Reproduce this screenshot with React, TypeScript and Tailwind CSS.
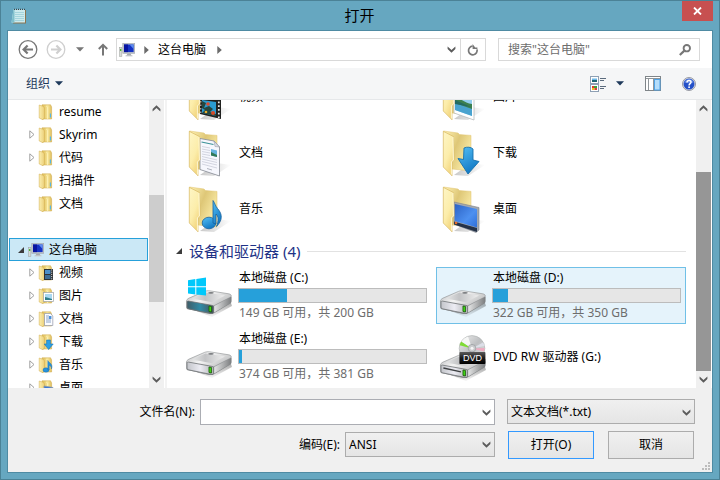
import type { ReactNode } from "react";

type Kind = "plain" | "video" | "picture" | "document" | "download" | "music" | "desktop";

/* ---------- small glyphs ---------- */

function Chevron({ up = false }: { up?: boolean }) {
  return (
    <svg width="9" height="7" viewBox="0 0 9 7" className={up ? "rotate-180" : ""} aria-hidden="true">
      <path d="M0.6 0.4L4.5 4L8.4 0.4V3L4.5 6.8L0.6 3Z" fill="#5c5c5c" />
    </svg>
  );
}

function Caret({ color }: { color: string }) {
  return (
    <svg width="8" height="5" viewBox="0 0 8 5" aria-hidden="true">
      <path d="M0 0.3H8L4 4.6Z" fill={color} />
    </svg>
  );
}

function Crumb() {
  return (
    <svg width="5" height="8" viewBox="0 0 5 8" aria-hidden="true">
      <path d="M0.3 0L4.8 4L0.3 8Z" fill="#6b6b6b" />
    </svg>
  );
}

function Computer() {
  return (
    <svg width="16" height="16" viewBox="0 0 16 16" aria-hidden="true">
      <rect x="0.5" y="5.5" width="2.4" height="9" fill="#d8dad8" stroke="#9a9e9a" strokeWidth="0.5" />
      <rect x="1.1" y="7" width="1.2" height="2" fill="#3cb521" />
      <rect x="3.8" y="1.4" width="12" height="10" fill="#bfc3c8" stroke="#9aa0a6" strokeWidth="0.5" />
      <rect x="5" y="2.5" width="9.6" height="7.6" fill="#1533c4" />
      <path d="M5 2.5H9V10.1H5Z" fill="#0714a0" />
      <path d="M10.5 2.5H14.6V7Z" fill="#5d8cf0" />
      <path d="M8.5 11.5H11.5L12.8 14H7.2Z" fill="#a5a9ad" />
      <rect x="6.5" y="13.3" width="7" height="1.1" fill="#c9cccf" />
    </svg>
  );
}

/* ---------- 16px folders ---------- */

function smallOverlay(kind: Kind): ReactNode {
  switch (kind) {
    case "video":
      return (
        <g>
          <rect x="6" y="4" width="9" height="11" fill="#2e3134" />
          <rect x="7" y="5" width="5.5" height="4" fill="#4b8fc9" />
          <rect x="7" y="10" width="5.5" height="4" fill="#3d6d96" />
          <path d="M13.7 4.5V15" stroke="#e8e8e8" strokeWidth="1" strokeDasharray="1 1.2" />
        </g>
      );
    case "picture":
      return (
        <g>
          <rect x="5.5" y="4.5" width="10" height="9" fill="#fff" stroke="#9aa0a4" strokeWidth="0.7" />
          <rect x="7" y="6" width="7" height="6" fill="#a9d8f2" />
          <path d="M7 9L10 9.8L14 11V12H7Z" fill="#2f7f8c" />
        </g>
      );
    case "document":
      return (
        <g>
          <path d="M6.5 2.5H12.5L14.8 5V14.5H6.5Z" fill="#fbfcff" stroke="#9096a8" strokeWidth="0.7" />
          <path d="M8 5H11M8 7H13M8 9H13M8 11H13" stroke="#7f9cc4" strokeWidth="0.9" />
          <rect x="11" y="5" width="2.4" height="3" fill="#4a90d9" />
        </g>
      );
    case "download":
      return <path d="M8.6 6H12.4V10H15.2L10.6 15.5L6.2 10H8.6Z" fill="#2ba0e6" stroke="#1873b4" strokeWidth="0.6" />;
    case "music":
      return (
        <g fill="#2593de" stroke="#1565a8" strokeWidth="0.4">
          <ellipse cx="8" cy="13" rx="3" ry="2.2" />
          <path d="M9.8 13V3.5C11 6 15.5 7 13.4 12C13.6 9.6 12.4 8.6 11.2 8.2V13Z" />
        </g>
      );
    case "desktop":
      return <path d="M6 6L15 7.5V14L6 12.5Z" fill="#3978d8" stroke="#8a98a8" strokeWidth="0.8" />;
    default:
      return <path d="M12.4 9.5V13.5" stroke="#4db7e8" strokeWidth="1.1" />;
  }
}

function SmallFolder({ kind }: { kind: Kind }) {
  return (
    <svg width="16" height="16" viewBox="0 0 16 16" className="shrink-0" aria-hidden="true">
      <path d="M4 0.8H12.6L13.6 3V15H4Z" fill="url(#smallBack)" stroke="#cfa84a" strokeWidth="0.5" />
      <path d="M8.2 2L9.6 3.4V15" stroke="#fff4bd" strokeWidth="0.8" fill="none" />
      <path d="M1.2 1L4.8 2.2L6.4 3.6V13.8L5 15.8L1.2 14Z" fill="url(#smallLeaf)" stroke="#cfa84a" strokeWidth="0.5" />
      {smallOverlay(kind)}
    </svg>
  );
}

/* ---------- 48px folders ---------- */

function largeOverlay(kind: Kind): ReactNode {
  switch (kind) {
    case "video":
      return (
        <g>
          <path d="M16 12L37 16V46L16 41Z" fill="#20211f" />
          <path d="M18 27L32 29V43L18 40Z" fill="#2b9bd0" />
          <path d="M18 28L22 30L20 35L25 33L29 36L26 39L32 41V43L18 40L21 37L18 35Z" fill="#24463f" />
          <circle cx="24" cy="31" r="1.8" fill="#df4b2d" />
          <circle cx="29" cy="40" r="2" fill="#d74b28" />
          <circle cx="22" cy="39" r="1.3" fill="#e8ae30" />
          <path d="M34.8 17V45" stroke="#eee" strokeWidth="1.7" strokeDasharray="1.8 2" />
          <path d="M16.8 14V41" stroke="#ddd" strokeWidth="1" strokeDasharray="1.5 2" />
        </g>
      );
    case "picture":
      return (
        <g>
          <path d="M16 10L36 14V47L16 40Z" fill="#fff" stroke="#b7bbbd" strokeWidth="0.8" />
          <path d="M17 13L34 17V43L17 37Z" fill="#94ceef" />
          <path d="M17 26C23 24 27 31 34 31V37L17 33Z" fill="#3c8050" />
          <path d="M17 30L34 36V43L17 37Z" fill="#4aa3cf" />
          <path d="M17 27L26 31L33 34L17 31Z" fill="#246a60" />
        </g>
      );
    case "document":
      return (
        <g>
          <path d="M16 9.5L30 12L35.5 18V47L16 40.5Z" fill="#f6f7fd" stroke="#8f939c" strokeWidth="0.9" />
          <path d="M30 12L31 17.5L35.5 18Z" fill="#d8dbe5" stroke="#8f939c" strokeWidth="0.5" />
          <path d="M17.5 13L29.5 15.5" stroke="#3c9298" strokeWidth="1.2" />
          <path
            d="M18 17.5L26 19M18 20L26 21.5M18 22.5L26 24M18 25L26 26.5M18 27.5L33 31M18 30L33 33.5M18 32.5L33 36M18 35L33 39"
            stroke="#c9ccd8"
            strokeWidth="0.8"
          />
          <path d="M27 20L33 21.5V28L27 26.5Z" fill="#67b3df" />
          <path d="M27 23L33 26V28L27 26.5Z" fill="#317a58" />
          <path d="M23 39.5L28 41" stroke="#9a9fac" strokeWidth="0.8" />
        </g>
      );
    case "download":
      return (
        <path
          d="M26 19C29 17.6 33 18 35 20V31L41 32.5L30 45L20 29.5L25.5 30.5Z"
          fill="url(#blueGlow)"
          stroke="#1671ad"
          strokeWidth="0.9"
        />
      );
    case "music":
      return (
        <g>
          <ellipse cx="25" cy="38" rx="6.8" ry="5.8" fill="url(#blueGlow)" stroke="#17619d" strokeWidth="0.8" />
          <path
            d="M29 38V15.5C31 18 31 20.5 33.5 23.5C37.5 28 38.8 33 35 38.5L32.5 41.5C34.8 36 34.5 31 32 29V39Z"
            fill="url(#blueGlow)"
            stroke="#17619d"
            strokeWidth="0.8"
          />
        </g>
      );
    case "desktop":
      return (
        <g>
          <path d="M16 17L41 22.5V45L38 47.5L16 39Z" fill="#a2a8b0" stroke="#7d8288" strokeWidth="0.6" />
          <path d="M16.8 19L39 24V42.5L16.8 36Z" fill="url(#screen)" />
          <path d="M16 36.5L39 43V47L16 39.5Z" fill="#243248" />
          <circle cx="18" cy="38" r="1.3" fill="#e36a2c" />
        </g>
      );
    default:
      return null;
  }
}

function LargeFolder({ kind }: { kind: Kind }) {
  return (
    <svg width="48" height="48" viewBox="0 0 48 48" className="shrink-0" aria-hidden="true">
      <path d="M16 46L33 34L47 36L30 47Z" fill="url(#shade)" />
      <path d="M5.5 2L20 4L21.5 5.6L33 6.4V42L14 40Z" fill="url(#backFill)" stroke="#e0c26c" strokeWidth="0.5" />
      {largeOverlay(kind)}
      <path d="M5.3 2.3L15.4 7.5L16 31L14 33V46.8L5.3 38Z" fill="url(#leafFill)" stroke="#d9b862" strokeWidth="0.7" />
      <path d="M15 8L15.4 31L13.4 33V45.6" stroke="#fffadd" strokeWidth="0.9" fill="none" />
    </svg>
  );
}

/* ---------- 48px drives ---------- */

function DriveIcon({ kind }: { kind: "system" | "disk" | "dvd" }) {
  return (
    <svg width="48" height="48" viewBox="0 0 48 48" className="shrink-0" aria-hidden="true">
      <g transform={kind === "dvd" ? "translate(0 3)" : undefined}>
        <path d="M10 38L28 45L48 34L46 28Z" fill="url(#driveShadow)" />
        <path
          d="M2.4 29.5V35.4C2.4 36.6 3 37 4.2 37.3L25.6 41.9C27.4 42.2 28.6 42 30 41.2L46 31.8C47.2 31 47.6 30.2 47.6 29V24.6L28 32Z"
          fill="#86898b"
        />
        <path
          d="M2.4 29.6C2.4 27.8 3.4 27 5 26.1L20.5 19.4C22.4 18.7 23.8 18.6 25.6 18.8L44.8 21.8C47.6 22.4 48 24.2 46 25.4L31 33.2C29.4 34 28.2 34 26.6 33.7L4.4 30Z"
          fill="url(#driveTop)"
          stroke="#8b8e91"
          strokeWidth="0.6"
        />
        <path d="M8 26.6L21.5 20.6L41 23.4L28 30.2Z" fill="url(#drivePlate)" />
        <path
          d="M3 30.2C3 29.2 3.6 28.9 4.6 29.1L27 33.2C29 33.5 29.6 34 29.6 35.4V39.8C29.6 41.2 28.8 41.7 27 41.4L4.8 36.9C3.6 36.6 3 36 3 35Z"
          fill={kind === "system" ? "url(#driveTeal)" : "url(#driveFront)"}
          stroke="#707376"
          strokeWidth="0.8"
        />
        <path d="M30.2 34L47 25V30.4L30.2 40.6Z" fill="url(#driveSide)" />
        <path d="M25 34L27.4 34.4V40L25 39.5Z" fill="#43e016" stroke="#1d5c0d" strokeWidth="0.9" />
        <ellipse cx="27" cy="20.8" rx="2.8" ry="0.9" fill="#77797c" />
        {kind === "dvd" && <path d="M5.4 32L23 35.8" stroke="#3e4143" strokeWidth="1.3" />}
      </g>
      {kind === "system" && (
        <path d="M4 8.2L11.3 7.1V14.3H4ZM12.3 7L22 5.6V14.3H12.3ZM4 15.3H11.3V22.4L4 21.4ZM12.3 15.3H22V23.6L12.3 22.4Z" fill="#00c8fb" />
      )}
      {kind === "dvd" && (
        <g>
          <circle cx="34" cy="15.4" r="12.8" fill="url(#disc)" stroke="#b2b4b5" strokeWidth="0.7" />
          <path d="M34 15.4L21.6 12.2A12.8 12.8 0 0 1 23.4 8.4Z" fill="#7fdc35" />
          <path d="M34 15.4L23.4 8.4A12.8 12.8 0 0 1 30 3.4Z" fill="#f6f7f6" />
          <path d="M34 15.4L45 9.4A12.8 12.8 0 0 1 46.6 13Z" fill="#dcdfe8" />
          <path d="M34 15.4L46.6 15A12.8 12.8 0 0 1 46 18.6Z" fill="#f0aac0" />
          <circle cx="34" cy="15.2" r="3.8" fill="#c9cbcd" stroke="#8f9295" strokeWidth="0.6" />
          <circle cx="34" cy="15.2" r="1.5" fill="#f6f6f6" />
          <rect x="21.4" y="19" width="26" height="12" rx="0.8" fill="url(#dvdBand)" />
          <text x="34.4" y="28.2" textAnchor="middle" fontSize="9" fontWeight="500" fill="#fff" fontFamily="'Liberation Sans', sans-serif">
            DVD
          </text>
        </g>
      )}
    </svg>
  );
}

function Gradients() {
  return (
    <svg width="0" height="0" className="absolute" aria-hidden="true">
      <defs>
        <linearGradient id="smallBack">
          <stop offset="0.2" stopColor="#e5c766" />
          <stop offset="0.6" stopColor="#f8e79c" />
          <stop offset="1" stopColor="#dfbd5c" />
        </linearGradient>
        <linearGradient id="smallLeaf">
          <stop offset="0" stopColor="#fbeeaf" />
          <stop offset="1" stopColor="#ecd07a" />
        </linearGradient>
        <linearGradient id="backFill" x1="0" y1="0" x2="1" y2="0.6">
          <stop offset="0.1" stopColor="#f9eaa8" />
          <stop offset="0.5" stopColor="#dec777" />
          <stop offset="0.9" stopColor="#f6e6a0" />
        </linearGradient>
        <linearGradient id="leafFill" x1="0" y1="0" x2="0.6" y2="1">
          <stop offset="0" stopColor="#fef6c6" />
          <stop offset="0.6" stopColor="#fcedaa" />
          <stop offset="1" stopColor="#f2d47c" />
        </linearGradient>
        <linearGradient id="shade">
          <stop offset="0" stopColor="#c8c8c8" />
          <stop offset="1" stopColor="#ffffff" />
        </linearGradient>
        <linearGradient id="blueGlow" x1="0" y1="0" x2="0.5" y2="1">
          <stop offset="0" stopColor="#56c0f6" />
          <stop offset="1" stopColor="#1279c4" />
        </linearGradient>
        <linearGradient id="screen" x1="0" y1="0" x2="1" y2="1">
          <stop offset="0" stopColor="#2c62c4" />
          <stop offset="0.6" stopColor="#4d90f0" />
          <stop offset="1" stopColor="#2f6fd8" />
        </linearGradient>
        <linearGradient id="driveShadow" x1="0" y1="0" x2="0.3" y2="1">
          <stop offset="0.3" stopColor="#000" stopOpacity="0.4" />
          <stop offset="1" stopColor="#000" stopOpacity="0.05" />
        </linearGradient>
        <linearGradient id="driveTop" x1="0" y1="0" x2="1" y2="0.5">
          <stop offset="0" stopColor="#b4b6b8" />
          <stop offset="0.5" stopColor="#f4f4f4" />
          <stop offset="1" stopColor="#c2c3c4" />
        </linearGradient>
        <linearGradient id="drivePlate">
          <stop offset="0" stopColor="#e6e7e7" />
          <stop offset="0.4" stopColor="#c2c3c5" />
          <stop offset="1" stopColor="#eeeeee" />
        </linearGradient>
        <linearGradient id="driveFront">
          <stop offset="0" stopColor="#c3c5ca" />
          <stop offset="0.5" stopColor="#ececf3" />
          <stop offset="1" stopColor="#b2b4b6" />
        </linearGradient>
        <linearGradient id="driveTeal">
          <stop offset="0" stopColor="#3f5d68" />
          <stop offset="0.5" stopColor="#2f8ba6" />
          <stop offset="1" stopColor="#48525a" />
        </linearGradient>
        <linearGradient id="driveSide">
          <stop offset="0" stopColor="#e4e5e5" />
          <stop offset="1" stopColor="#7d7f81" />
        </linearGradient>
        <linearGradient id="disc" x1="0" y1="0" x2="1" y2="1">
          <stop offset="0" stopColor="#f2f2f2" />
          <stop offset="0.5" stopColor="#bcbec0" />
          <stop offset="1" stopColor="#e8e8e8" />
        </linearGradient>
        <linearGradient id="dvdBand" x1="0" y1="0" x2="0" y2="1">
          <stop offset="0" stopColor="#5b5b5b" />
          <stop offset="0.5" stopColor="#1b1b1b" />
          <stop offset="1" stopColor="#000000" />
        </linearGradient>
      </defs>
    </svg>
  );
}

/* ---------- building blocks ---------- */

function ScrollBar({ before, thumb, after, dark }: { before: number; thumb: number; after: number; dark?: boolean }) {
  return (
    <div className="flex w-4 shrink-0 flex-col border-r border-white bg-[#f0f0f0]">
      <button type="button" aria-label="向上滚动" className="flex h-[17px] shrink-0 items-center justify-center">
        <Chevron up />
      </button>
      <div style={{ flexGrow: before }} />
      <div className={dark ? "bg-[#969696]" : "bg-[#cdcdcd]"} style={{ flexGrow: thumb }} />
      <div style={{ flexGrow: after }} />
      <button type="button" aria-label="向下滚动" className="flex h-[17px] shrink-0 items-center justify-center">
        <Chevron />
      </button>
    </div>
  );
}

function TreeRow({ label, kind, expandable = true }: { label: string; kind: Kind; expandable?: boolean }) {
  return (
    <li className="flex h-[23px] items-center pl-5">
      <span className="flex w-[9px] shrink-0">
        {expandable && (
          <svg width="6" height="9" viewBox="0 0 6 9" aria-hidden="true">
            <path d="M0.8 0.8L5 4.5L0.8 8.2Z" fill="#fff" stroke="#a0a0a0" strokeWidth="1" />
          </svg>
        )}
      </span>
      <SmallFolder kind={kind} />
      <span className="pl-[5px]">{label}</span>
    </li>
  );
}

function FolderTile({ label, kind }: { label: string; kind: Kind }) {
  return (
    <li className="flex h-[52px] items-center gap-[7px] pl-[2px]">
      <LargeFolder kind={kind} />
      <span>{label}</span>
    </li>
  );
}

type Drive = { name: string; kind: "system" | "disk" | "dvd"; used?: number; note?: string; active?: boolean };

function DriveTile({ name, kind, used, note, active }: Drive) {
  return (
    <li
      className={
        active
          ? "flex h-[57px] items-center gap-[6px] border border-[#70c0e7] bg-[#e5f3fb] pr-1 pl-px"
          : "flex h-[57px] items-center gap-[6px] border border-transparent pr-1 pl-px"
      }
    >
      <DriveIcon kind={kind} />
      {used === undefined ? (
        <span className="pl-px">{name}</span>
      ) : (
        <div className="min-w-0 flex-1">
          <div className="pl-px leading-5">{name}</div>
          <div
            className="h-[15px] border border-[#bcbcbc] bg-[#e6e6e6]"
            role="meter"
            aria-label={name}
            aria-valuenow={used}
            aria-valuemin={0}
            aria-valuemax={100}
          >
            <div className="h-full bg-[#26a0da]" style={{ width: `${used}%` }} />
          </div>
          <div className="pl-px leading-5 text-[#6d6d6d]">{note}</div>
        </div>
      )}
    </li>
  );
}

function Picker({ id, value, className }: { id: string; value: string; className: string }) {
  return (
    <div className={`relative ${className}`}>
      <select
        id={id}
        defaultValue={value}
        aria-label={id === "filetype" ? "文件类型" : undefined}
        className="block h-[25px] w-full appearance-none border border-[#acacac] bg-linear-to-b from-[#f0f0f0] to-[#e5e5e5] pr-4 pl-[3px] outline-none"
      >
        <option>{value}</option>
      </select>
      <span className="pointer-events-none absolute inset-y-0 right-1 flex items-center">
        <Chevron />
      </span>
    </div>
  );
}

/* ---------- data ---------- */

const favourites = [
  { label: "resume", expandable: false },
  { label: "Skyrim", expandable: true },
  { label: "代码", expandable: true },
  { label: "扫描件", expandable: false },
  { label: "文档", expandable: false },
];

const libraries: { label: string; kind: Kind }[] = [
  { label: "视频", kind: "video" },
  { label: "图片", kind: "picture" },
  { label: "文档", kind: "document" },
  { label: "下载", kind: "download" },
  { label: "音乐", kind: "music" },
  { label: "桌面", kind: "desktop" },
];

const drives: Drive[] = [
  { name: "本地磁盘 (C:)", kind: "system", used: 25.5, note: "149 GB 可用，共 200 GB" },
  { name: "本地磁盘 (D:)", kind: "disk", used: 8, note: "322 GB 可用，共 350 GB", active: true },
  { name: "本地磁盘 (E:)", kind: "disk", used: 1.8, note: "374 GB 可用，共 381 GB" },
  { name: "DVD RW 驱动器 (G:)", kind: "dvd" },
];

/* ---------- dialog ---------- */

export default function App() {
  return (
    <div className="flex h-screen flex-col border border-[#4b8296] bg-[#66a7c0] px-[6px] pb-[6px] font-['Noto_Sans','Noto_Sans_CJK_SC',sans-serif] text-xs leading-4 text-black">
      <Gradients />
      <header className="flex h-[29px] shrink-0 items-start">
        <div className="flex h-[29px] w-[30px] items-center pl-1">
          <svg width="16" height="16" viewBox="0 0 16 16" aria-hidden="true">
            <path d="M3 2H15V15.5H2Z" fill="#8b7550" />
            <path d="M2.5 1.5H14V14.5H0.5Z" fill="#cdebee" />
            <path d="M2.5 1.5L0.5 14.5H3.5V1.5Z" fill="#7fc0cc" />
            <path d="M4 4.5H13M4 6.5H13M4 8.5H13M4 10.5H13M4 12.5H13" stroke="#93ccd6" strokeWidth="0.7" />
            <path d="M3 1.3H14" stroke="#3b474c" strokeWidth="1.2" strokeDasharray="1 1" />
          </svg>
        </div>
        <h1 className="flex-1 text-center text-[15px] leading-7">打开</h1>
        <button type="button" aria-label="关闭" className="flex h-5 w-[31px] items-center justify-center bg-[#c75050]">
          <svg width="9" height="8" viewBox="0 0 9 8" aria-hidden="true">
            <path d="M1 0.5L8 7.5M8 0.5L1 7.5" stroke="#fff" strokeWidth="1.8" />
          </svg>
        </button>
      </header>

      <main className="flex min-h-0 flex-1 flex-col border border-[#4f8ba3] bg-[#f0f0f0]">
        {/* navigation */}
        <nav className="flex h-[37px] shrink-0 items-center bg-white pr-3 pl-[10px]">
          <button type="button" aria-label="后退">
            <svg width="20" height="20" viewBox="0 0 20 20" fill="none" stroke="#777" aria-hidden="true">
              <circle cx="10" cy="9.5" r="8.8" strokeWidth="1.3" />
              <path d="M15 9.5H6M9.6 5.5L5.6 9.5L9.6 13.5" strokeWidth="2.2" />
            </svg>
          </button>
          <button type="button" aria-label="前进" className="ml-2">
            <svg width="20" height="20" viewBox="0 0 20 20" fill="none" stroke="#cfcfcf" aria-hidden="true">
              <circle cx="10" cy="9.5" r="8.8" strokeWidth="1.3" />
              <path d="M5 9.5H14M10.4 5.5L14.4 9.5L10.4 13.5" strokeWidth="2.2" />
            </svg>
          </button>
          <button type="button" aria-label="最近浏览的位置" className="ml-[10px]">
            <Caret color="#777" />
          </button>
          <button type="button" aria-label="上移" className="ml-[14px]">
            <svg width="10" height="13" viewBox="0 0 10 13" fill="none" stroke="#777" strokeWidth="2" aria-hidden="true">
              <path d="M5 12.5V2M0.8 6L5 1.8L9.2 6" />
            </svg>
          </button>
          <div className="ml-2 flex h-[23px] flex-1 items-center border border-[#d9d9d9] pl-[2px]">
            <Computer />
            <span className="ml-[9px]">
              <Crumb />
            </span>
            <a href="#computer" className="ml-[9px]">
              这台电脑
            </a>
            <span className="ml-[11px]">
              <Crumb />
            </span>
            <button type="button" aria-label="以前的位置" className="ml-auto mr-1">
              <Chevron />
            </button>
            <button type="button" aria-label="刷新" className="flex h-full w-[25px] items-center justify-center border-l border-[#d9d9d9]">
              <svg width="12" height="12" viewBox="0 0 12 12" fill="none" aria-hidden="true">
                <path d="M5.6 2.2A4.3 4.3 0 1 0 10 5.4" stroke="#777" strokeWidth="1.7" />
                <path d="M5.6 0V5H10.4V3.6H8.2Z" fill="#777" />
              </svg>
            </button>
          </div>
          <div className="ml-3 flex h-[23px] w-[202px] items-center border border-[#d9d9d9] pr-2 pl-[9px]">
            <input
              type="search"
              aria-label="搜索"
              placeholder={'搜索"这台电脑"'}
              className="min-w-0 flex-1 outline-none placeholder:text-[#6d6d6d]"
            />
            <svg width="12" height="12" viewBox="0 0 12 12" fill="none" stroke="#777" aria-hidden="true">
              <circle cx="7.8" cy="4.2" r="3.2" strokeWidth="1.9" />
              <path d="M5.4 6.6L0.8 11" strokeWidth="2.2" />
            </svg>
          </div>
        </nav>

        {/* command bar */}
        <div className="flex h-8 shrink-0 items-center border-b border-[#e6e8ea] bg-[#f5f6f7] pr-4 pl-[18px]">
          <button type="button" className="flex items-center gap-[5px] text-[#1e395b]">
            组织
            <Caret color="#1e395b" />
          </button>
          <button type="button" aria-label="更改视图" className="ml-auto flex items-center gap-[9px]">
            <svg width="17" height="16" viewBox="0 0 17 16" aria-hidden="true">
              <rect x="0.5" y="0.5" width="8" height="7" fill="#fff" stroke="#8ea0b4" />
              <rect x="2" y="2.5" width="5" height="1.6" fill="#6cb7e6" />
              <rect x="2" y="4" width="5" height="2" fill="#1f6473" />
              <rect x="0.5" y="8.5" width="8" height="7" fill="#fff" stroke="#8ea0b4" />
              <path d="M2 10H4V12H2Z" fill="#e33c2c" />
              <path d="M4 10H7V12H4Z" fill="#38a33a" />
              <path d="M2 12H4.5V14H2Z" fill="#f0c020" />
              <path d="M4.5 12H7V14H4.5Z" fill="#d6403c" />
              <path d="M10 2.5H16M10 4.5H14M10 10.5H16M10 12.5H14" stroke="#5b6b7d" />
            </svg>
            <Caret color="#1e395b" />
          </button>
          <button type="button" aria-label="显示预览窗格" className="ml-[21px]">
            <svg width="16" height="15" viewBox="0 0 16 15" aria-hidden="true">
              <rect x="0.5" y="0.5" width="15" height="14" fill="#fff" stroke="#7f8589" />
              <path d="M1 2.5H15M3.5 3V14M8.5 3V14" stroke="#8f9599" />
              <rect x="9.5" y="3.5" width="5.5" height="10.5" fill="#b4ddfb" stroke="#4fa3e8" />
            </svg>
          </button>
          <button type="button" aria-label="获取帮助" className="ml-[21px]">
            <svg width="14" height="14" viewBox="0 0 14 14" aria-hidden="true">
              <circle cx="7" cy="7" r="6.5" fill="#e3e5ea" stroke="#8c9099" strokeWidth="0.9" />
              <circle cx="7" cy="7" r="5.5" fill="#2450c8" />
              <path d="M2.2 5.5A5 5 0 0 1 11.8 5.5Q7 7 2.2 5.5Z" fill="#5d83e0" />
              <path d="M5 5.4C5 2.8 9.2 2.9 9 5.2C8.9 6.7 7.1 6.6 7.1 8.4" stroke="#fff" strokeWidth="1.5" fill="none" />
              <rect x="6.3" y="9.4" width="1.6" height="1.6" fill="#fff" />
            </svg>
          </button>
        </div>

        <div className="flex min-h-0 flex-1">
          {/* folder tree */}
          <aside className="flex w-[159px] shrink-0 border-r-2 border-[#f3f3f3] bg-white">
            <ul className="min-w-0 flex-1 overflow-hidden pr-px pl-px">
              {favourites.map((f) => (
                <TreeRow key={f.label} label={f.label} kind="plain" expandable={f.expandable} />
              ))}
              <li className="mt-[23px]">
                <div className="flex h-[23px] items-center border border-[#26a0da] bg-[#cbe8f6] pl-2">
                  <svg width="6" height="6" viewBox="0 0 6 6" aria-hidden="true">
                    <path d="M6 0V6H0Z" fill="#3c3c3c" />
                  </svg>
                  <span className="ml-1">
                    <Computer />
                  </span>
                  <span className="pl-[5px]">这台电脑</span>
                </div>
                <ul>
                  {libraries.map((l) => (
                    <TreeRow key={l.label} label={l.label} kind={l.kind} />
                  ))}
                </ul>
              </li>
            </ul>
            <ScrollBar before={78} thumb={107} after={69} />
          </aside>

          {/* contents, scrolled to the end */}
          <section className="flex min-w-0 flex-1 flex-col justify-end overflow-hidden bg-white pr-[10px] pb-[3px] pl-[15px]">
            <ul className="grid shrink-0 grid-cols-2 gap-1">
              {libraries.map((l) => (
                <FolderTile key={l.label} label={l.label} kind={l.kind} />
              ))}
            </ul>
            <div className="-ml-[6px] flex h-8 shrink-0 items-center">
              <svg width="6" height="6" viewBox="0 0 6 6" aria-hidden="true">
                <path d="M6 0V6H0Z" fill="#3c3c3c" />
              </svg>
              <h2 className="ml-[7px] pb-px text-[15px] leading-5 text-[#1e3287]">设备和驱动器 (4)</h2>
              <div className="ml-[7px] h-px flex-1 bg-[#e2e2e2]" />
            </div>
            <ul className="grid shrink-0 grid-cols-2 gap-1">
              {drives.map((d) => (
                <DriveTile key={d.name} {...d} />
              ))}
            </ul>
          </section>
          <ScrollBar before={55} thumb={199} after={0} dark />
        </div>

        {/* file name, encoding and actions */}
        <form
          className="relative grid shrink-0 grid-cols-[1fr_188px] gap-x-3 gap-y-[6px] pt-[11px] pr-[17px] pb-3"
          onSubmit={(e) => e.preventDefault()}
        >
          <div className="flex items-center justify-end gap-[5px]">
            <label htmlFor="filename">文件名(N):</label>
            <div className="relative w-[295px]">
              <input
                id="filename"
                type="text"
                className="block h-[26px] w-full border border-[#abadb3] bg-white pr-4 pl-[3px] outline-none"
              />
              <button type="button" aria-label="以前的文件名" className="absolute inset-y-0 right-1 flex items-center">
                <Chevron />
              </button>
            </div>
          </div>
          <Picker id="filetype" value="文本文档(*.txt)" className="w-full" />
          <div className="flex h-[29px] items-center justify-end gap-[5px] pb-[2px]">
            <label htmlFor="encoding">编码(E):</label>
            <Picker id="encoding" value="ANSI" className="w-[150px]" />
          </div>
          <div className="flex items-start justify-between px-px">
            <button type="submit" className="h-7 w-[86px] border border-[#3399ff] bg-linear-to-b from-[#f0f0f0] to-[#e5e5e5]">
              打开(O)
            </button>
            <button type="button" className="h-7 w-[86px] border border-[#acacac] bg-linear-to-b from-[#f0f0f0] to-[#e5e5e5]">
              取消
            </button>
          </div>
          <svg width="8" height="8" viewBox="0 0 8 8" className="absolute right-[2px] bottom-[2px]" aria-hidden="true">
            <path d="M6 0H8V2H6ZM3 3H5V5H3ZM6 3H8V5H6ZM0 6H2V8H0ZM3 6H5V8H3ZM6 6H8V8H6Z" fill="#bcbcbc" />
          </svg>
        </form>
      </main>
    </div>
  );
}
